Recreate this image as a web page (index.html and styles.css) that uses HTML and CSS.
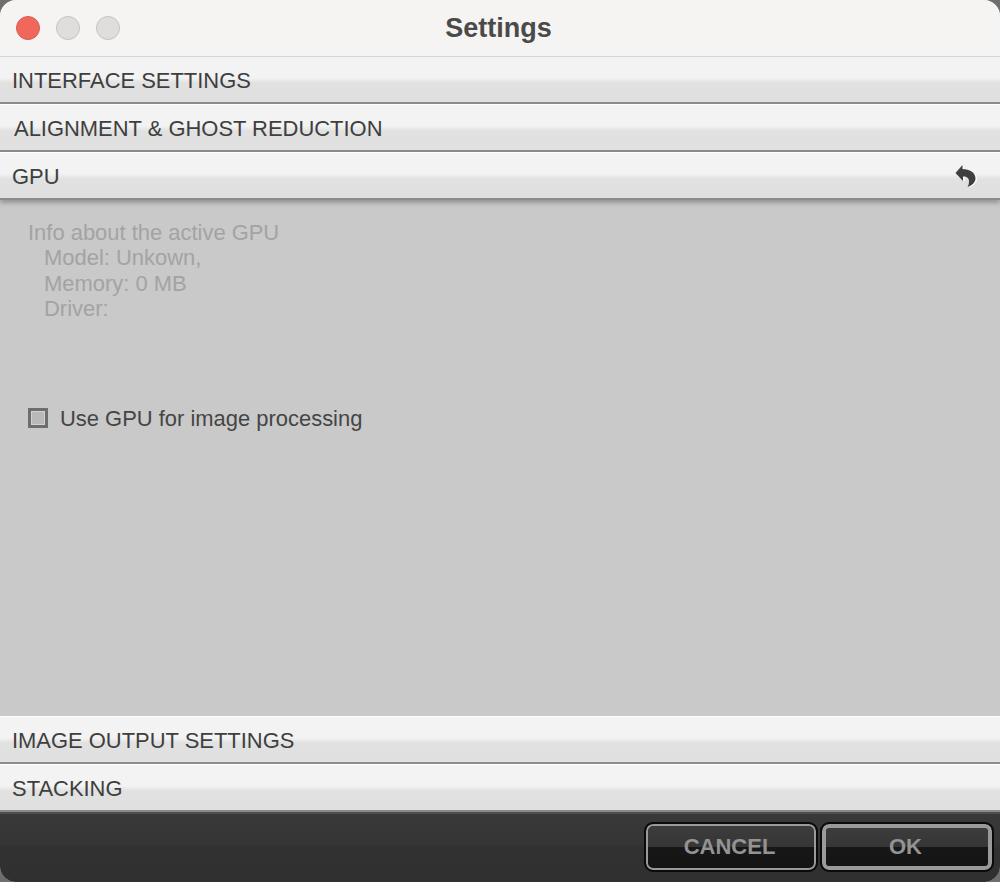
FILE: index.html
```html
<!DOCTYPE html>
<html lang="en">

<head>
    <meta charset="UTF-8">
    <title>Settings</title>
    <link rel="stylesheet" href="styles.css">
</head>

<body>
    <div class="window">
        <div class="titlebar">
            <div class="lights">
                <span class="light light-close"></span>
                <span class="light"></span>
                <span class="light"></span>
            </div>
            <div class="title">Settings</div>
        </div>

        <div class="section">INTERFACE SETTINGS</div>
        <div class="section section-indent">ALIGNMENT &amp; GHOST REDUCTION</div>
        <div class="section section-open">
            <span>GPU</span>
            <svg class="reset-icon" width="24" height="24" viewBox="0 0 24 24">
                <path class="reset-shadow" d="M10 2 3 9.500 10.500 17.500V13C14 13 16.500 14.500 16.500 18 16.500 20 16 22 15 23.500 20 22 23 18.500 23 15 23 9 17 6 10 6Z" />
                <path class="reset-main" d="M8.500 1 1.500 9 9 17V12.500C13 12.500 15 14 15 17.500 15 19.500 14.500 21.500 13.500 23 18.500 21.500 21.500 18 21.500 14.500 21.500 8.500 15.500 5 8.500 5Z" />
            </svg>
        </div>

        <div class="panel">
            <div class="gpu-info">
                <div>Info about the active GPU</div>
                <div class="gpu-line">Model: Unkown,</div>
                <div class="gpu-line">Memory: 0 MB</div>
                <div class="gpu-line">Driver:</div>
            </div>
            <label class="check-row">
                <span class="checkbox"></span>
                <span>Use GPU for image processing</span>
            </label>
        </div>

        <div class="section section-after-panel">IMAGE OUTPUT SETTINGS</div>
        <div class="section">STACKING</div>

        <div class="footer">
            <div class="btn">CANCEL</div>
            <div class="btn btn-default">OK</div>
        </div>
    </div>
</body>

</html>
```

FILE: styles.css
```css
* {
    box-sizing: border-box;
}

html,
body {
    margin: 0;
    height: 882px;
    background-color: #6e6e6e;
}

.window {
    display: flex;
    flex-direction: column;
    width: 1000px;
    height: 882px;
    overflow: hidden;
    border-radius: 16px;
    font-family: "Liberation Sans", Arial, sans-serif;
    color: #3f3f3f;
    background-color: #c9c9c9;
}

.titlebar {
    display: flex;
    align-items: center;
    justify-content: center;
    position: relative;
    height: 57px;
    flex-shrink: 0;
    background-color: #f5f4f2;
    border-bottom: 1px solid #d6d6d6;
}

.lights {
    display: flex;
    gap: 16px;
    position: absolute;
    left: 16px;
    top: 16px;
}

.light {
    width: 24px;
    height: 24px;
    border-radius: 50%;
    background-color: #dfdedc;
    border: 1px solid #c4c3c1;
}

.light-close {
    background-color: #f0675c;
    border-color: #e0574d;
}

.title {
    font-size: 27px;
    font-weight: bold;
    color: #4a4a4a;
    margin-left: -3px;
}

.section {
    display: flex;
    align-items: center;
    justify-content: space-between;
    height: 48px;
    flex-shrink: 0;
    padding: 2px 22px 0 12px;
    font-size: 21.950px;
    background: linear-gradient(#f3f3f3 0%, #f3f3f3 46%, #e1e1e1 58%, #e0e0e0 100%);
    border-top: 1px solid #ffffff;
    border-bottom: 2px solid #8b8b8b;
}

.titlebar + .section {
    border-top: none;
    height: 47px;
}

.section-indent {
    padding-left: 14px;
}

.section-open {
    position: relative;
    box-shadow: 0 3px 4px rgba(90, 90, 90, 0.45);
}

.reset-icon {
    margin-top: -2px;
}

.reset-main {
    fill: #3f3f3f;
}

.reset-shadow {
    fill: #ffffff;
}

.panel {
    display: flex;
    flex-direction: column;
    flex: 1;
    padding: 19.500px 28px 0;
    font-size: 21.950px;
    background-color: #c9c9c9;
}

.gpu-info {
    color: #a3a3a3;
    line-height: 25.600px;
}

.gpu-line {
    padding-left: 16px;
}

.check-row {
    display: flex;
    align-items: center;
    gap: 12px;
    margin-top: 84px;
    color: #454545;
}

.checkbox {
    width: 20px;
    height: 20px;
    margin-top: -1px;
    background-color: #b9b9b9;
    border: 3px solid #6e6e6e;
    box-shadow: inset 0 0 0 1px #d2d2d2;
}

.footer {
    display: flex;
    justify-content: flex-end;
    align-items: flex-start;
    gap: 6px;
    height: 70px;
    flex-shrink: 0;
    padding: 10px 8px 0 0;
    background: linear-gradient(#393939 0%, #353535 45%, #313131 50%, #303030 100%);
    border-top: 2px solid #4e4e4e;
}

.btn {
    display: flex;
    align-items: center;
    justify-content: center;
    width: 170px;
    height: 46px;
    padding-right: 3px;
    font-size: 22px;
    font-weight: bold;
    color: #939393;
    border: 2px solid #9a9a9a;
    border-radius: 7px;
    outline: 2px solid #0a0a0a;
    outline-offset: 0;
    background: linear-gradient(#3c3c3c 0%, #363636 49%, #171717 50%, #141414 100%);
}

.btn-default {
    border-width: 4px;
}
```
